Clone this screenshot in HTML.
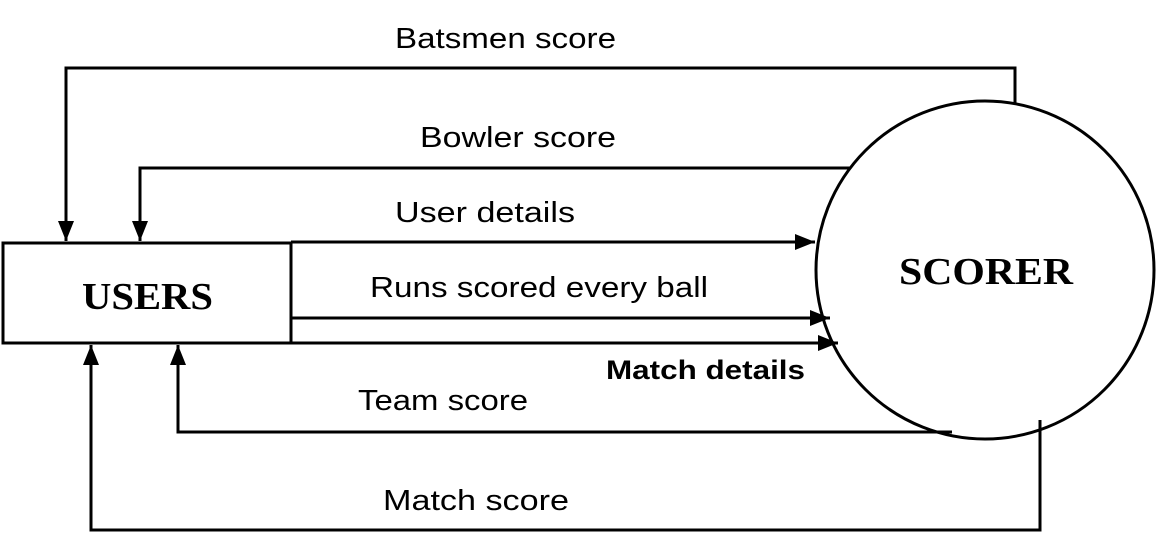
<!DOCTYPE html>
<html><head><meta charset="utf-8"><style>
html,body{margin:0;padding:0;background:#fff;}
svg{display:block;}
text{font-family:"Liberation Sans",sans-serif;font-size:29px;fill:#000;}
.b{font-family:"Liberation Serif",serif;font-weight:bold;font-size:38px;}
</style></head><body>
<svg width="1156" height="534" viewBox="0 0 1156 534" xmlns="http://www.w3.org/2000/svg">
<defs>
<marker id="a" viewBox="0 0 10 10" refX="10" refY="5" markerWidth="7" markerHeight="7" markerUnits="userSpaceOnUse" orient="auto">
<path d="M0,0 L10,5 L0,10 z" fill="#000"/></marker>
<marker id="m" viewBox="0 0 10 10" refX="10" refY="5" markerWidth="20" markerHeight="16" markerUnits="userSpaceOnUse" orient="auto" preserveAspectRatio="none">
<path d="M0,0 L10,5 L0,10 z" fill="#000"/></marker>
</defs>
<g stroke="#000" stroke-width="3" fill="none">
<rect x="3" y="243" width="288" height="100"/>
<circle cx="985" cy="270" r="169"/>
<polyline points="1015,103 1015,68 66,68 66,241" marker-end="url(#m)"/>
<polyline points="850,168 140,168 140,241" marker-end="url(#m)"/>
<line x1="291" y1="242" x2="815" y2="242" marker-end="url(#m)"/>
<line x1="291" y1="318" x2="830" y2="318" marker-end="url(#m)"/>
<line x1="291" y1="343" x2="838" y2="343" marker-end="url(#m)"/>
<polyline points="952,432 178,432 178,345" marker-end="url(#m)"/>
<polyline points="1040,420 1040,530 91,530 91,345" marker-end="url(#m)"/>
</g>
<text x="395" y="48" textLength="221" lengthAdjust="spacingAndGlyphs">Batsmen score</text>
<text x="420" y="147" textLength="196" lengthAdjust="spacingAndGlyphs">Bowler score</text>
<text x="395" y="222" textLength="180" lengthAdjust="spacingAndGlyphs">User details</text>
<text x="370" y="297" textLength="338" lengthAdjust="spacingAndGlyphs">Runs scored every ball</text>
<text x="606" y="379" textLength="199" lengthAdjust="spacingAndGlyphs" font-weight="bold" style="font-size:27px">Match details</text>
<text x="358" y="410" textLength="170" lengthAdjust="spacingAndGlyphs">Team score</text>
<text x="383" y="510" textLength="186" lengthAdjust="spacingAndGlyphs">Match score</text>
<text class="b" x="82" y="309" textLength="131" lengthAdjust="spacingAndGlyphs">USERS</text>
<text class="b" x="899" y="284" textLength="174" lengthAdjust="spacingAndGlyphs">SCORER</text>
</svg>
</body></html>
